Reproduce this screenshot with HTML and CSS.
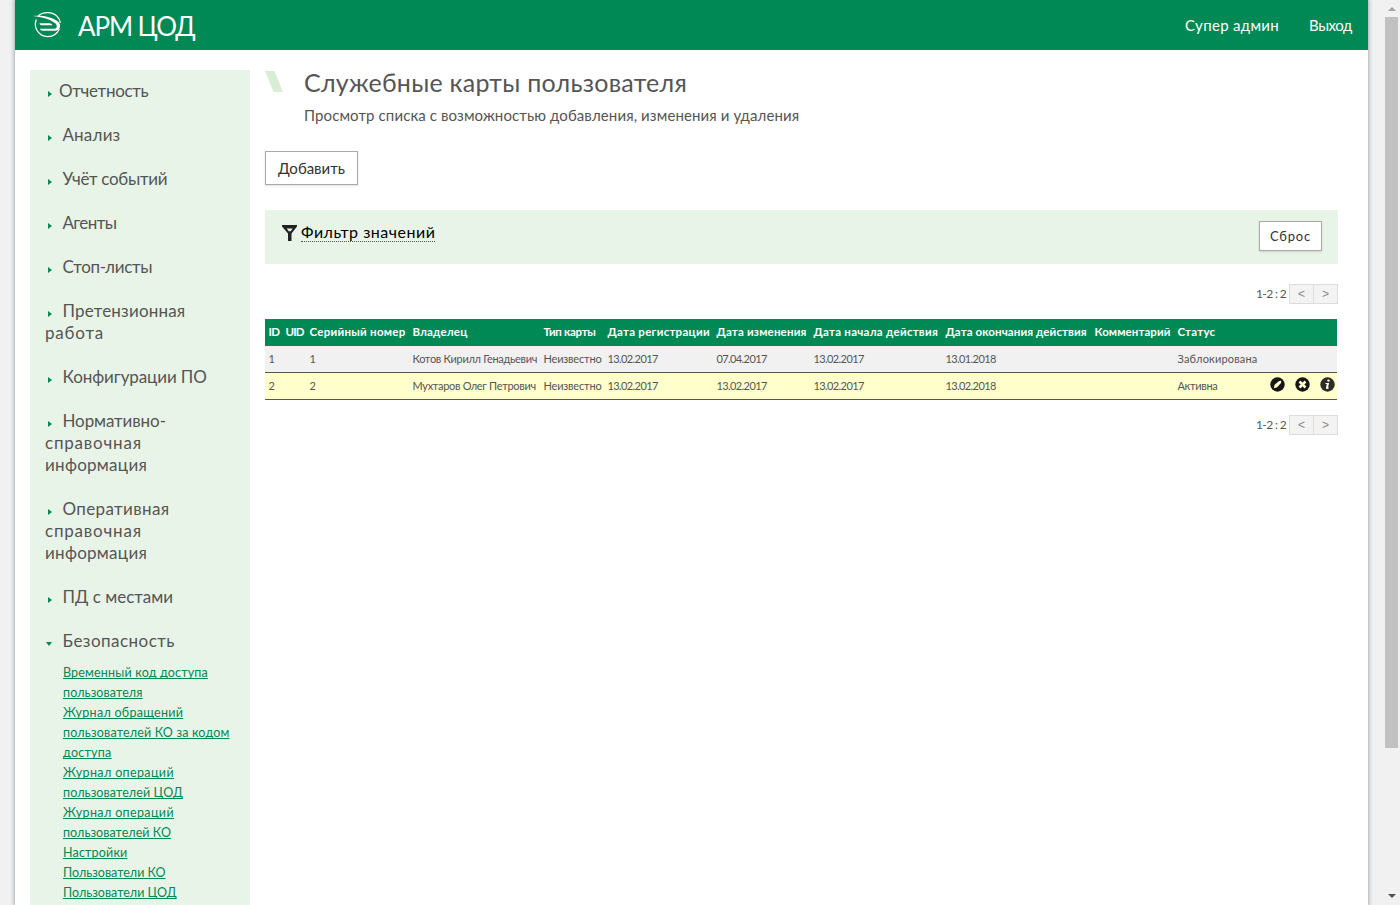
FILE: index.html
```html
<!DOCTYPE html>
<html lang="ru">
<head>
<meta charset="utf-8">
<title>АРМ ЦОД</title>
<link rel="stylesheet" href="styles.css">
</head>
<body>
<div class="page">
  <header class="header">
    <svg class="logo" width="30" height="28" viewBox="0 0 30 28" fill="none" stroke="#fff">
      <path d="M5.200 4.200C10-.8 19.500-.2 24.200 4.400c1.700 1.800 2.900 4 3.100 6.500" stroke-width="1.300"/>
      <path d="M3.300 7.500C-.2 17 7 24.800 14.800 24.600c5.500-.1 9.500-3.200 11.500-7.600" stroke-width="1.300"/>
      <path d="M0 4c9-.9 19 .8 24.800 5.500 3.700 3.200 3.200 8.300-2.300 9.200H10c-1.800 0-2.700-.8-3-2h14.500c3-.4 2.900-3.600.7-5.400C17.500 7.300 9 5 0 4z" fill="#fff" stroke="none"/>
      <path d="M6.500 11.200h9.800c1.700 0 2.700.8 3.200 2.100H9c-1.500 0-2.300-.8-2.500-2.100z" fill="#fff" stroke="none"/>
    </svg>
    <span class="brand">АРМ ЦОД</span>
    <a class="user">Супер админ</a>
    <a class="exit">Выход</a>
  </header>
  <div class="columns">
    <nav class="menu">
      <div class="item first"><i class="arrow"></i><span class="n3">Отчетность</span></div>
      <div class="item"><i class="arrow"></i><span class="p2">Анализ</span></div>
      <div class="item"><i class="arrow"></i><span class="n3">Учёт событий</span></div>
      <div class="item"><i class="arrow"></i><span class="n6">Агенты</span></div>
      <div class="item"><i class="arrow"></i><span class="n3">Стоп-листы</span></div>
      <div class="item"><i class="arrow"></i><span class="p2">Претензионная</span><br><span class="p8">работа</span></div>
      <div class="item"><i class="arrow"></i><span class="n1">Конфигурации ПО</span></div>
      <div class="item"><i class="arrow"></i><span class="n1">Нормативно-</span><br><span class="p8">справочная</span><br><span class="p3">информация</span></div>
      <div class="item"><i class="arrow"></i><span class="p4">Оперативная</span><br><span class="p8">справочная</span><br><span class="p3">информация</span></div>
      <div class="item"><i class="arrow"></i><span>ПД с местами</span></div>
      <div class="item open"><i class="arrow down"></i><span class="p5">Безопасность</span></div>
      <ul class="submenu">
        <li><a class="p2">Временный код доступа</a><br><a class="p1">пользователя</a></li>
        <li><a class="p3">Журнал обращений</a><br><a class="p2">пользователей КО за кодом</a><br><a class="p3">доступа</a></li>
        <li><a class="p4">Журнал операций</a><br><a class="p1">пользователей ЦОД</a></li>
        <li><a class="p4">Журнал операций</a><br><a class="p05">пользователей КО</a></li>
        <li><a class="p2">Настройки</a></li>
        <li><a>Пользователи КО</a></li>
        <li><a>Пользователи ЦОД</a></li>
      </ul>
    </nav>
    <main class="content">
      <div class="title">
        <svg class="slash" width="18" height="21" viewBox="0 0 18 21"><path d="M0 0h9.500L18 21H8.500z" fill="#d9edd5"/></svg>
        <div>
          <h1>Служебные карты пользователя</h1>
          <p>Просмотр списка с возможностью добавления, изменения и удаления</p>
        </div>
      </div>
      <button class="btn add">Добавить</button>
      <section class="filter">
        <svg class="funnel" width="16" height="17" viewBox="0 0 16 17"><path fill-rule="evenodd" d="M0 0h15v1.500L9.500 8.500V16H6V8.500L0 1.500zM4.700 3.500l2 2.700h2L10.700 3.500z" fill="#222"/></svg>
        <a class="toggle">Фильтр значений</a>
        <button class="btn reset">Сброс</button>
      </section>
      <div class="pager"><span>1-2 : 2</span><b>&lt;</b><b>&gt;</b></div>
      <table class="cards">
        <colgroup><col class="c1"><col class="c2"><col class="c3"><col class="c4"><col class="c5"><col class="c6"><col class="c7"><col class="c8"><col class="c9"><col class="c10"><col class="c11"></colgroup>
        <thead>
          <tr><th class="n6">ID</th><th class="n9">UID</th><th class="p3">Серийный номер</th><th class="p2">Владелец</th><th class="n3">Тип карты</th><th class="p3">Дата регистрации</th><th class="p2">Дата изменения</th><th class="p3">Дата начала действия</th><th class="p1">Дата окончания действия</th><th class="p1">Комментарий</th><th class="p3">Статус</th></tr>
        </thead>
        <tbody>
          <tr><td>1</td><td></td><td>1</td><td class="n3">Котов Кирилл Генадьевич</td><td class="n2">Неизвестно</td><td class="n6">13.02.2017</td><td class="n6">07.04.2017</td><td class="n6">13.02.2017</td><td class="n6">13.01.2018</td><td></td><td class="p2">Заблокирована</td></tr>
          <tr class="active"><td>2</td><td></td><td>2</td><td class="n3">Мухтаров Олег Петрович</td><td class="n2">Неизвестно</td><td class="n6">13.02.2017</td><td class="n6">13.02.2017</td><td class="n6">13.02.2017</td><td class="n6">13.02.2018</td><td></td>
            <td><div class="last"><span class="n3">Активна</span>
              <span class="actions">
                <svg width="15" height="15" viewBox="0 0 15 15"><circle cx="7.500" cy="7.500" r="7.200" fill="#161616"/><path d="M3.800 11.200l.8-3.500 4.500-3.700 2.200-.3-.3 2.200L7.200 10.200z" fill="#ffc"/></svg>
                <svg width="15" height="15" viewBox="0 0 15 15"><circle cx="7.500" cy="7.500" r="7.200" fill="#161616"/><path d="M4.500 4.500l6 6M10.500 4.500l-6 6" stroke="#ffc" stroke-width="2.600"/></svg>
                <svg width="15" height="15" viewBox="0 0 15 15"><circle cx="7.500" cy="7.500" r="7.200" fill="#2b2b2b"/><circle cx="8.500" cy="3.600" r="1.200" fill="#ffc"/><path d="M5.500 6h3.600L8 10.700l1.200-.3-.3.900c-1.200.8-3.200 1-2.900-.6l.8-3.700H5.300z" fill="#ffc"/></svg>
              </span></div></td></tr>
        </tbody>
      </table>
      <div class="pager bottom"><span>1-2 : 2</span><b>&lt;</b><b>&gt;</b></div>
    </main>
  </div>
</div>
<div class="scrollbar"><i class="up"></i><i class="thumb"></i><i class="dn"></i></div>
</body>
</html>
```
FILE: styles.css
```css
* { box-sizing: border-box; }
html, body { margin: 0; height: 905px; overflow: hidden; }
body { background: #f1f1f1; color: #555; font-family: Lato, "Open Sans", sans-serif; display: flex; }
.page { width: 1353px; height: 905px; margin-left: 15px; background: #fff; box-shadow: 0 0 4px 1px #a9abb3; flex: none; }

.header { height: 50px; background: #008855; color: #fff; display: flex; align-items: center; padding: 0 16px 0 18px; font-size: 15px; }
.logo { flex: none; margin-top: 2px; }
.brand { font-size: 26px; letter-spacing: -1.1px; margin-left: 15px; line-height: 50px; padding-top: 2px; }
.user { margin-left: auto; letter-spacing: .32px; }
.exit { margin-left: 30px; letter-spacing: -.4px; }

.columns { display: flex; padding: 20px 30px 0 15px; gap: 15px; height: 855px; overflow: hidden; }
.menu { width: 220px; height: 900px; flex: none; background: #e9f4e8; padding: 10px 15px; }
.item { font-size: 17px; line-height: 22px; margin-bottom: 22px; white-space: nowrap; }
.item.open { margin-bottom: 11px; }
.arrow { display: inline-block; width: 0; height: 0; border: 3px solid transparent; border-left: 4px solid #008855; border-right: 0; margin: 0 10.500px 0 3px; vertical-align: 0; }
.first .arrow { margin-right: 7px; }
.arrow.down { border: 3px solid transparent; border-top: 4px solid #008855; border-bottom: 0; margin: 0 10.500px 0 1px; vertical-align: 1px; }
.submenu { list-style: none; margin: 0; padding: 0 0 0 18px; font-size: 12.5px; line-height: 20px; color: #008855; white-space: nowrap; }
.submenu a { text-decoration: underline; text-decoration-skip-ink: none; text-underline-offset: 1px; text-decoration-thickness: 1px; }

.content { width: 1073px; flex: none; }
.title { display: flex; height: 81px; }
.slash { margin: 1px 21px 0 0; flex: none; }
h1 { margin: -2px 0 0; font-size: 25px; font-weight: 400; line-height: 28px; letter-spacing: .26px; }
.title p { margin: 9px 0 0; font-size: 15px; line-height: 20px; letter-spacing: .11px; }
.btn { display: block; background: #fff; border: 1px solid #aaa; border-radius: 0; color: #333; font-family: inherit; padding: 0 0 1px; box-shadow: 0 1px 2px rgba(0,0,0,.12); }
.add { width: 93px; height: 34px; font-size: 15px; }
.filter { margin-top: 25px; height: 54px; background: #e9f4e8; display: flex; align-items: flex-start; padding: 11px 16px 0 17px; }
.funnel { margin-top: 4px; }
.toggle { color: #000; font-size: 16px; letter-spacing: .5px; line-height: 18px; padding-top: 2px; margin-left: 3px; border-bottom: 1px dotted #555; }
.reset { margin-left: auto; width: 63px; height: 30px; font-size: 13px; letter-spacing: .8px; }
.pager { display: flex; justify-content: flex-end; margin-top: 20px; height: 20px; line-height: 20px; font-size: 12px; }
.pager span { letter-spacing: -.65px; margin-right: 3px; }
.pager b { width: 25px; border: 1px solid #ddd; background: #f3f3f3; color: #888; font: 400 12px/19px "Liberation Sans", sans-serif; text-align: center; }
.pager b + b { margin-left: -1px; }
.pager.bottom { margin-top: 15px; }

.cards { width: 1072px; margin-top: 15px; border-collapse: separate; border-spacing: 0; table-layout: fixed; font-size: 11px; }
.cards th, .cards td { height: 27px; padding: 0 0 2px 3.500px; text-align: left; white-space: nowrap; }
.cards th { background: #008855; color: #fff; font-size: 11.5px; font-weight: 700; }
.cards td { background: #f1f1f1; border-bottom: 1px solid #555; }
.cards .active td { background: #ffc; }
.c1 { width: 17px; } .c2 { width: 24px; } .c3 { width: 103px; } .c4 { width: 131px; } .c5 { width: 64px; } .c6 { width: 109px; }
.c7 { width: 97px; } .c8 { width: 132px; } .c9 { width: 149px; } .c10 { width: 83px; } .c11 { width: 163px; }
.last { display: flex; justify-content: space-between; align-items: center; }
.actions { display: flex; gap: 10px; padding-right: 2.500px; margin-top: -1px; }

.n9 { letter-spacing: -.9px; } .n6 { letter-spacing: -.6px; } .n3 { letter-spacing: -.3px; } .n2 { letter-spacing: -.18px; } .n1 { letter-spacing: -.1px; }
.p05 { letter-spacing: .05px; } .p1 { letter-spacing: .1px; } .p2 { letter-spacing: .18px; } .p3 { letter-spacing: .27px; } .p4 { letter-spacing: .37px; } .p5 { letter-spacing: .45px; } .p8 { letter-spacing: .8px; }

.scrollbar { width: 17px; height: 905px; margin-left: auto; background: #f1f1f1; display: flex; flex-direction: column; align-items: center; }
.up { border: 4px solid transparent; border-top: 0; border-bottom: 4px solid #a3a3a3; margin: 7px 0 6px; }
.thumb { width: 13px; height: 731px; background: #c1c1c1; }
.dn { border: 4px solid transparent; border-bottom: 0; border-top: 4px solid #505050; margin-top: 146px; }
```
